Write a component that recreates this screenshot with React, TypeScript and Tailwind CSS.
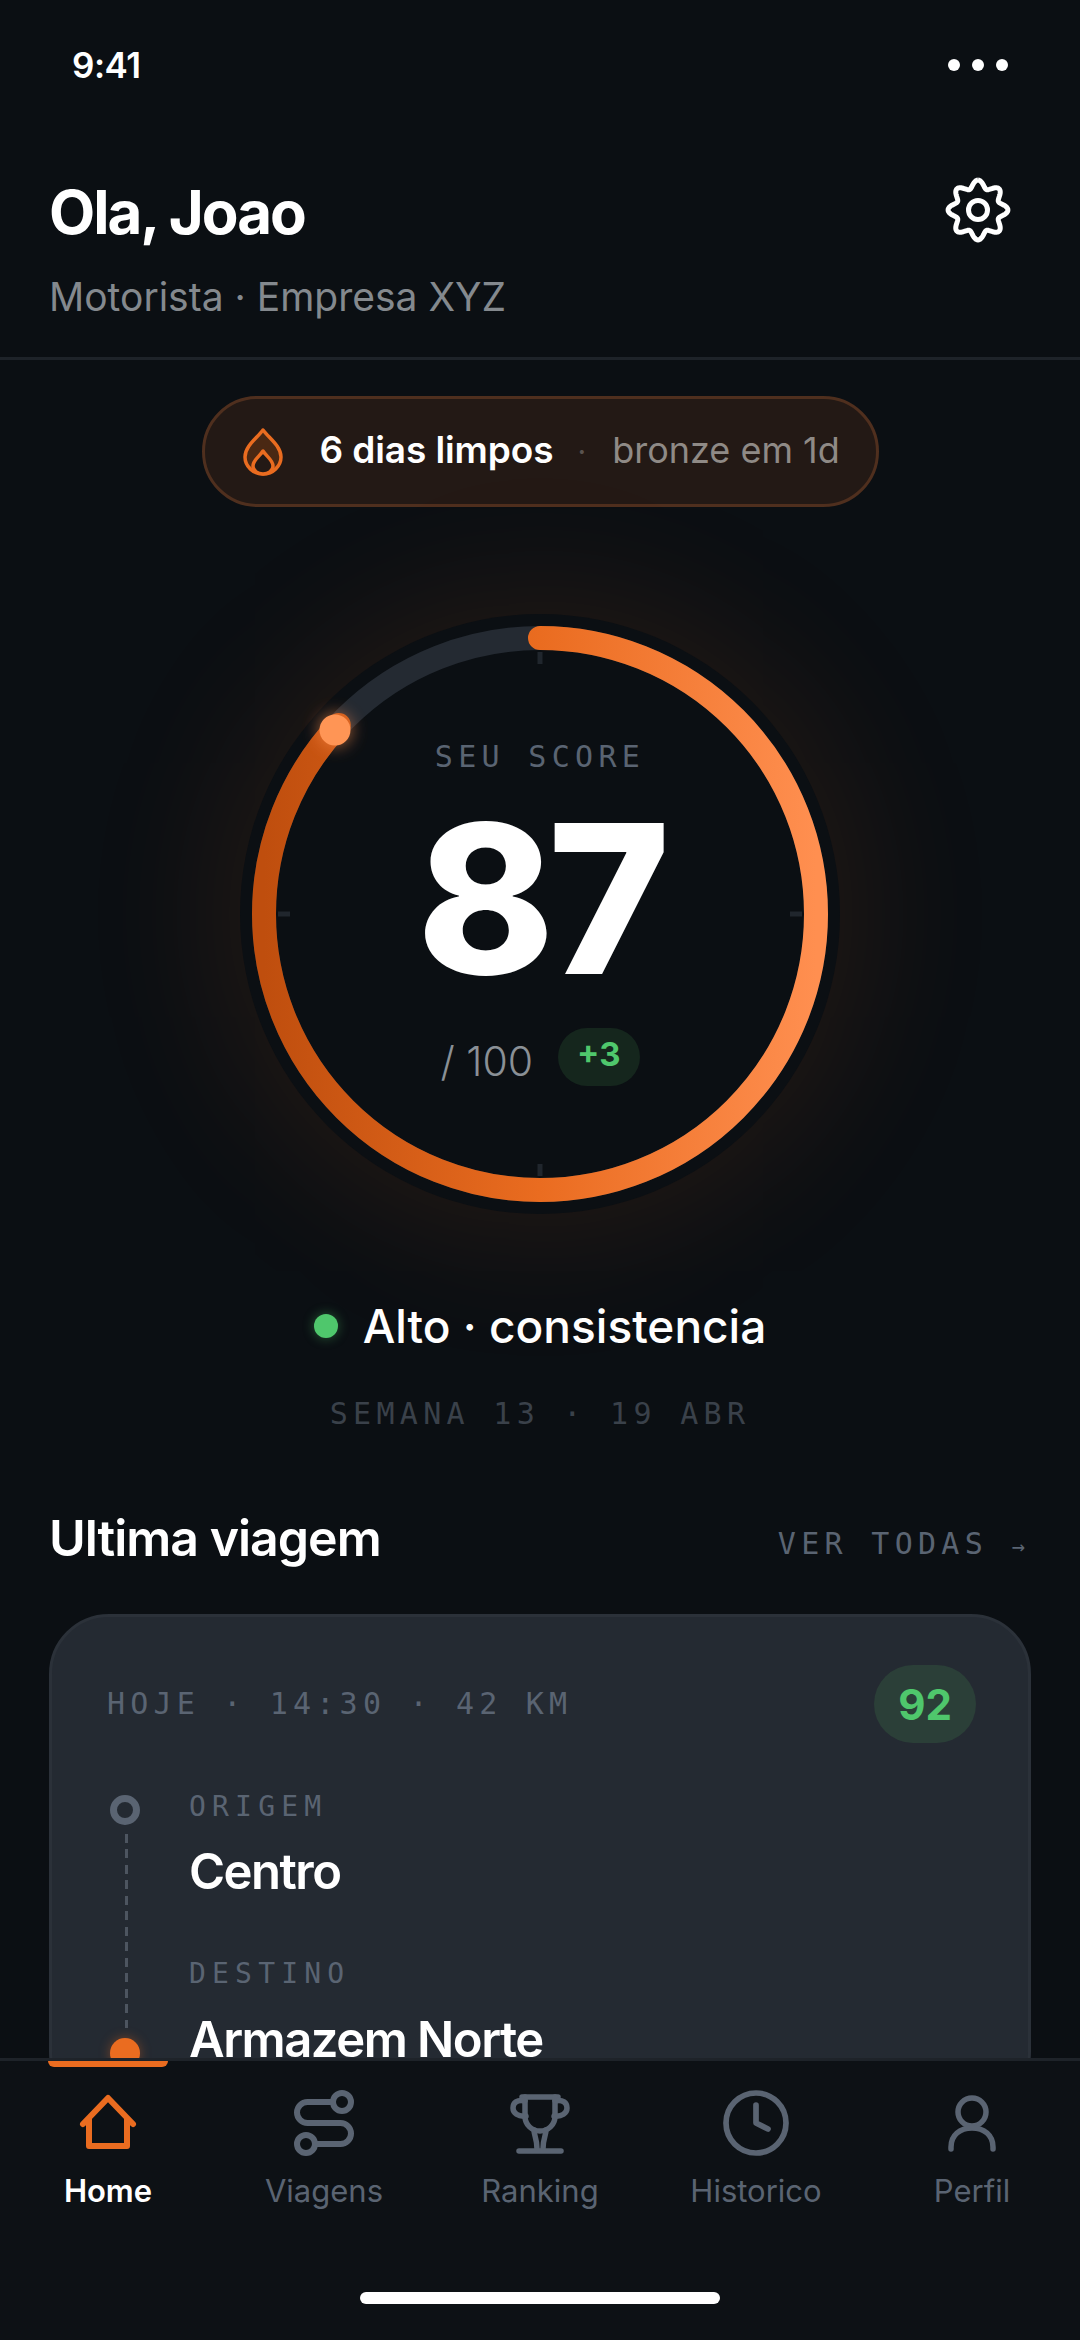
import { Route, Clock } from "lucide-react";

const mono = "font-['DejaVu_Sans_Mono',monospace]";

// eight rounded lobes, worked out instead of hand-typed
const gearPath = Array.from({ length: 241 }, (_, i) => {
  const t = (i / 240) * Math.PI * 2;
  const r = 26 + 3.9 * Math.cos(8 * t);
  const x = 39 + r * Math.sin(t);
  const y = 39 - r * Math.cos(t);
  return `${i === 0 ? "M" : "L"}${x.toFixed(2)} ${y.toFixed(2)}`;
}).join(" ");

function GearIcon() {
  return (
    <svg width="78" height="78" viewBox="0 0 78 78" fill="none" stroke="#ffffff" strokeWidth="5" strokeLinejoin="round">
      <path d={gearPath} />
      <circle cx="39" cy="39" r="9.5" />
    </svg>
  );
}

function FlameIcon() {
  return (
    <svg width="40" height="48" viewBox="0 0 40 48" fill="none" stroke="#ea6c20" strokeWidth="3.5" strokeLinejoin="round">
      <path d="M20 2 C14 10 2 18 2 29 C2 38 10 46 20 46 C30 46 38 38 38 29 C38 18 26 10 20 2 Z" fill="#4a2813" />
      <path d="M20 23 C17 28 10 32 10 38 C10 43 15 46 20 46 C25 46 30 43 30 38 C30 32 23 28 20 23 Z" fill="#231915" />
    </svg>
  );
}

function HomeIcon() {
  return (
    <svg width="72" height="72" viewBox="0 0 72 72" fill="none" stroke="#ea6c20" strokeWidth="6" strokeLinejoin="round" strokeLinecap="round">
      <path d="M11 37 L36 11 L61 37 M17 31 V59 H55 V31" />
    </svg>
  );
}

function TrophyIcon() {
  return (
    <svg width="72" height="72" viewBox="0 0 72 72" fill="none" stroke="#5a6472" strokeWidth="5.5" strokeLinejoin="round" strokeLinecap="round">
      <path d="M18 10 H54" />
      <path d="M21 10 V29 C21 38 28 44 36 44 C44 44 51 38 51 29 V10" />
      <path d="M21 14 C13 12 9 16 9 21 C9 26 14 30 22 29" />
      <path d="M51 14 C59 12 63 16 63 21 C63 26 58 30 50 29" />
      <path d="M30 43 C30 49 33 51 33 62 M42 43 C42 49 39 51 39 62" />
      <path d="M15 64 H57" />
    </svg>
  );
}

function PersonIcon() {
  return (
    <svg width="72" height="72" viewBox="0 0 72 72" fill="none" stroke="#5a6472" strokeWidth="5.5" strokeLinecap="round">
      <circle cx="36" cy="25" r="14" />
      <path d="M15 62 V60 C15 48 24 41 36 41 C48 41 57 48 57 60 V62" />
    </svg>
  );
}

function ScoreRing() {
  return (
    <div className="relative w-[600px] h-[600px] rounded-full bg-[#0b0f13] shadow-[0_0_150px_20px_rgba(234,108,32,0.11)]">
      <svg className="absolute inset-0" width="600" height="600" viewBox="0 0 600 600" fill="none">
        <defs>
          {/* circle below is rotated -90, so this runs left to right on screen */}
          <linearGradient id="ringFill" gradientUnits="userSpaceOnUse" x1="300" y1="24" x2="300" y2="576">
            <stop offset="0" stopColor="#bf4e0e" />
            <stop offset="0.5" stopColor="#ea6c20" />
            <stop offset="1" stopColor="#ff8f50" />
          </linearGradient>
          <filter id="dotGlow" x="-100%" y="-100%" width="300%" height="300%">
            <feGaussianBlur stdDeviation="8" />
          </filter>
        </defs>
        <circle cx="300" cy="300" r="276" stroke="#242a32" strokeWidth="24" />
        <circle
          cx="300"
          cy="300"
          r="276"
          stroke="url(#ringFill)"
          strokeWidth="24"
          strokeLinecap="round"
          pathLength="100"
          strokeDasharray="87 100"
          transform="rotate(-90 300 300)"
        />
        <path d="M300 38 V50 M300 550 V562 M38 300 H50 M550 300 H562" stroke="#20262d" strokeWidth="5" />
        <circle cx="95" cy="116" r="17" fill="#ff8f50" opacity="0.55" filter="url(#dotGlow)" />
        <circle cx="95" cy="116" r="15.5" fill="#ff9555" />
      </svg>
      <div className="absolute inset-0 flex flex-col items-center">
        <div className={`${mono} mt-[125px] text-[30px] leading-[36px] tracking-[5.3px] text-[#5a6472]`}>SEU SCORE</div>
        <div className="mt-[19px] text-[208px] leading-[208px] font-extrabold tracking-[-7px] text-white">87</div>
        <div className="mt-[26px] flex items-center gap-[25px]">
          <span className="mt-[8px] text-[41px] leading-[50px] font-light text-[#8a9096]">/ 100</span>
          <span className="h-[58px] px-[19px] pb-[5px] flex items-center rounded-full bg-[#15261d] text-[33px] font-bold text-[#4fc76c]">+3</span>
        </div>
      </div>
    </div>
  );
}

function NavItem({ label, icon, active }: { label: string; icon: React.ReactNode; active?: boolean }) {
  return (
    <div className="relative flex-1 flex flex-col items-center pt-[26px]">
      {active && <div className="absolute top-0 w-[120px] h-[6px] rounded-b-[6px] bg-[#ea6c20]" />}
      {icon}
      <span className={`mt-[13px] text-[31px] leading-[38px] ${active ? "font-semibold text-white" : "text-[#5a6472]"}`}>{label}</span>
    </div>
  );
}

export default function App() {
  return (
    <div className="w-[1080px] h-[2340px] flex flex-col overflow-hidden bg-[#0b0f13] font-['Inter',sans-serif] text-white">
      {/* status bar */}
      <div className="h-[130px] shrink-0 flex items-center justify-between pl-[72px] pr-[72px]">
        <span className="text-[35px] font-semibold tracking-[-0.5px]">9:41</span>
        <div className="flex gap-[12px]">
          <span className="w-[12px] h-[12px] rounded-full bg-white" />
          <span className="w-[12px] h-[12px] rounded-full bg-white" />
          <span className="w-[12px] h-[12px] rounded-full bg-white" />
        </div>
      </div>

      {/* header */}
      <div className="h-[230px] shrink-0 pl-[49px] pr-[50px] flex justify-between border-b-[3px] border-[#1e2329]">
        <div className="pt-[47px]">
          <div className="text-[60px] leading-[70px] font-bold tracking-[-2px]">Ola, Joao</div>
          <div className="mt-[26px] text-[39px] leading-[48px] text-[#84898e]">Motorista · Empresa XYZ</div>
        </div>
        <div className="mt-[41px] mr-[13px]">
          <GearIcon />
        </div>
      </div>

      <div className="flex-1 min-h-0 overflow-hidden flex flex-col items-center">
        {/* streak */}
        <div className="mt-[36px] w-[677px] h-[111px] shrink-0 flex items-center pl-[38px] rounded-full bg-[#231915] border-[3px] border-[#4f2f1e]">
          <FlameIcon />
          <span className="ml-[37px] pb-[4px] text-[37px] font-semibold tracking-[-0.1px]">6 dias limpos</span>
          <span className="ml-[24px] text-[30px] text-[#5a5350]">·</span>
          <span className="ml-[26px] pb-[4px] text-[36px] text-[#8f8a86]">bronze em 1d</span>
        </div>

        {/* score */}
        <div className="mt-[107px] shrink-0">
          <ScoreRing />
        </div>

        <div className="mt-[84px] flex items-center gap-[25px] shrink-0">
          <span className="w-[24px] h-[24px] rounded-full bg-[#4fc76c] shadow-[0_0_12px_rgba(79,199,108,0.4)]" />
          <span className="text-[46px] leading-[56px] font-medium">Alto · consistencia</span>
        </div>
        <div className={`${mono} mt-[42px] text-[30px] leading-[36px] tracking-[5.3px] text-[#3a414a] shrink-0`}>SEMANA 13 · 19 ABR</div>

        {/* last trip */}
        <div className="mt-[76px] w-full pl-[49px] pr-[50px] flex items-center justify-between shrink-0">
          <span className="text-[50px] leading-[60px] font-semibold tracking-[-1px]">Ultima viagem</span>
          <span className={`${mono} pt-[14px] text-[30px] leading-[36px] tracking-[5.3px] text-[#5a6472]`}>
            VER TODAS <span className="text-[22px]">→</span>
          </span>
        </div>

        <div className="mt-[46px] w-[982px] shrink-0 rounded-[60px] bg-[#242a32] border-[3px] border-[#2b3139] pt-[48px] pl-[55px] pr-[52px] pb-[40px]">
          <div className="flex items-center justify-between">
            <span className={`${mono} text-[30px] leading-[36px] tracking-[5.2px] text-[#5a6472]`}>HOJE · 14:30 · 42 KM</span>
            <span className="w-[102px] h-[78px] flex items-center justify-center rounded-full bg-[#2b3f38] text-[42px] font-bold text-[#4fc76c]">92</span>
          </div>
          <div className="mt-[47px] flex gap-[46px]">
            <div className="w-[36px] flex flex-col items-center">
              <span className="mt-[5px] w-[30px] h-[30px] shrink-0 rounded-full border-[7px] border-[#5a6472]" />
              <span className="mt-[9px] ml-[2px] h-[194px] w-[3px] bg-[repeating-linear-gradient(to_bottom,#4d5560_0,#4d5560_9px,transparent_9px,transparent_15.5px)]" />
              <span className="mt-[10px] w-[30px] h-[30px] shrink-0 rounded-full bg-[#ea6c20] shadow-[0_0_12px_rgba(234,108,32,0.4)]" />
            </div>
            <div>
              <div className={`${mono} text-[28px] leading-[34px] tracking-[6.2px] text-[#5a6472]`}>ORIGEM</div>
              <div className="mt-[19px] text-[49px] leading-[58px] font-semibold tracking-[-1.5px]">Centro</div>
              <div className={`${mono} mt-[56px] text-[28px] leading-[34px] tracking-[6.2px] text-[#5a6472]`}>DESTINO</div>
              <div className="mt-[20px] text-[49px] leading-[58px] font-semibold tracking-[-1.5px]">Armazem Norte</div>
            </div>
          </div>
        </div>
      </div>

      {/* bottom nav */}
      <div className="h-[282px] shrink-0 flex flex-col bg-[#0d1115] border-t-[3px] border-[#1e2329]">
        <div className="flex">
          <NavItem label="Home" active icon={<HomeIcon />} />
          <NavItem label="Viagens" icon={<Route size={72} strokeWidth={2} className="text-[#5a6472]" />} />
          <NavItem label="Ranking" icon={<TrophyIcon />} />
          <NavItem label="Historico" icon={<Clock size={72} strokeWidth={1.9} className="text-[#5a6472]" />} />
          <NavItem label="Perfil" icon={<PersonIcon />} />
        </div>
        <div className="mt-auto mb-[36px] mx-auto w-[360px] h-[12px] rounded-full bg-white" />
      </div>
    </div>
  );
}
